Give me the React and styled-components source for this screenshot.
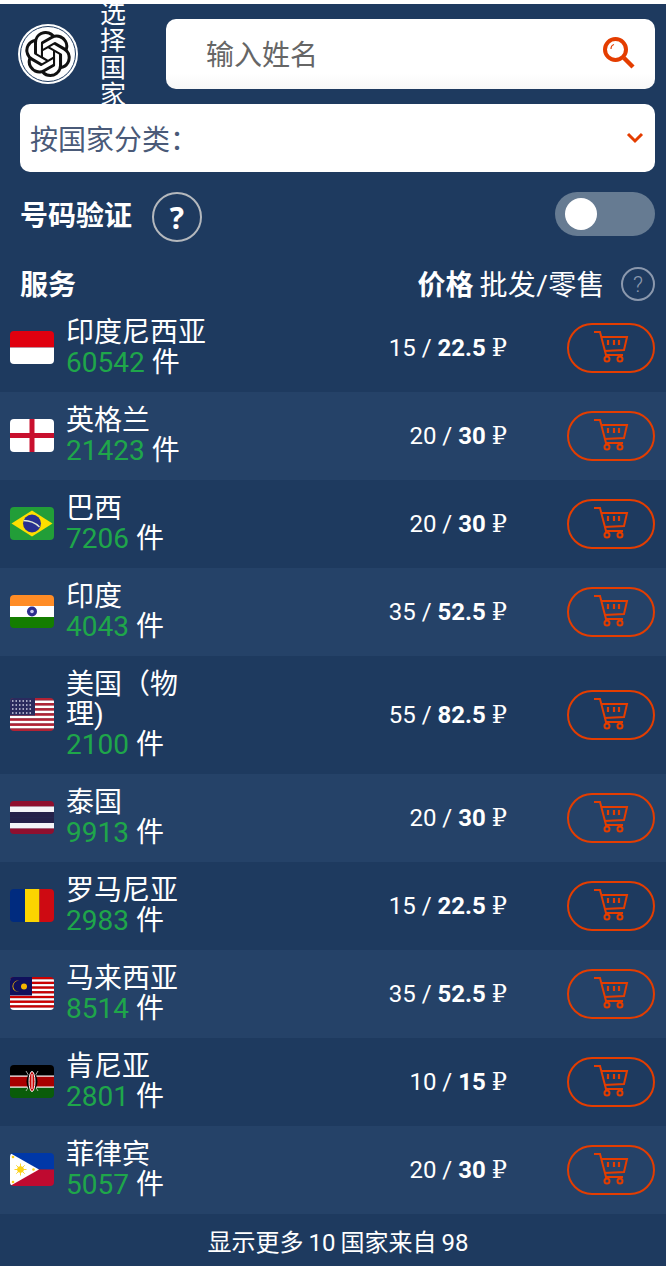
import React from "react";
import styled, { createGlobalStyle } from "styled-components";
import { SiOpenai } from "react-icons/si";

const ORANGE = "#e43d00";

const Global = createGlobalStyle`
  * { box-sizing: border-box; }
  html, body { margin: 0; padding: 0; background: #fff; }
  body { font-family: Roboto, "Noto Sans CJK SC", sans-serif; }
`;

const Page = styled.div`
  margin-top: 4px;
  width: 666px;
  height: 1262px;
  overflow: hidden;
  background: #1e3a5f;
  color: #fff;
`;

const TopBar = styled.div`
  display: flex;
  align-items: center;
  height: 100px;
  padding: 0 11px 0 18px;
  overflow: hidden;
`;

const LogoCircle = styled.div`
  display: flex;
  flex: none;
  align-items: center;
  justify-content: center;
  width: 60px;
  height: 60px;
  border-radius: 50%;
  background: #fff;
  color: #111;
  &::before {
    content: "";
    position: absolute;
    width: 54px;
    height: 54px;
    border: 1px solid #1e3a5f;
    border-radius: 50%;
  }
`;

const CountryLabel = styled.div`
  flex: none;
  width: 26px;
  margin: 1px 40px 0 22px;
  font-size: 26px;
  line-height: 27px;
`;

const SearchBox = styled.div`
  display: flex;
  flex: 1;
  align-items: center;
  justify-content: space-between;
  height: 70px;
  padding: 0 19px 0 40px;
  border-radius: 10px;
  background: linear-gradient(#fff 78%, #f7f7f7);
  color: #666;
  font-size: 28px;
  svg { margin-top: -2px; }
`;

const SearchHint = styled.span`
  margin-bottom: 2px;
`;

const SelectBox = styled.div`
  display: flex;
  align-items: center;
  justify-content: space-between;
  height: 68px;
  margin: 0 11px 0 20px;
  padding: 0 11px 0 10px;
  border-radius: 10px;
  background: #fff;
  color: #4a5a78;
  font-size: 28px;
`;

const CheckRow = styled.div`
  display: flex;
  align-items: center;
  height: 50px;
  margin-top: 20px;
  padding: 0 11px 0 20px;
  font-size: 28px;
  font-weight: 700;
`;

const CheckLabel = styled.span`
  margin-bottom: 6px;
`;

const BigHelp = styled.div`
  display: flex;
  align-items: center;
  justify-content: center;
  width: 50px;
  height: 50px;
  margin-left: 20px;
  border: 2px solid #b4b8bd;
  border-radius: 50%;
  font-family: "Open Sans", sans-serif;
  font-size: 30px;
  font-weight: 700;
`;

const Toggle = styled.div`
  display: flex;
  align-items: center;
  width: 100px;
  height: 44px;
  margin: -6px 0 0 auto;
  padding-left: 10px;
  border-radius: 22px;
  background: #667b92;
  &::before {
    content: "";
    width: 32px;
    height: 32px;
    border-radius: 50%;
    background: #fff;
  }
`;

const ListHead = styled.div`
  display: flex;
  align-items: center;
  height: 40px;
  margin-top: 22px;
  padding: 0 11px 0 20px;
  font-size: 28px;
`;

const HeadTitle = styled.b`
  margin: 0 auto 2px 0;
`;

const HeadPrice = styled.div`
  margin: 0 16px 2px 0;
  letter-spacing: 0.4px;
  b { margin-right: 6px; letter-spacing: 0; }
`;

const SmallHelp = styled.div`
  display: flex;
  align-items: center;
  justify-content: center;
  width: 34px;
  height: 34px;
  border: 2px solid #8b98ad;
  border-radius: 50%;
  color: #8b98ad;
  font-size: 22px;
  font-weight: 300;
`;

const Row = styled.div`
  display: flex;
  align-items: center;
  padding: 14px 11px 14px 10px;
  background: ${(p) => (p.$alt ? "#254268" : "#1e3a5f")};
`;

const FlagBox = styled.svg`
  flex: none;
  width: 44px;
  height: 33px;
  margin: 0 12px 2px 0;
  border-radius: 4px;
`;

const Info = styled.div`
  flex: none;
  width: 140px;
  font-size: 28px;
  line-height: 30px;
`;

const Count = styled.span`
  color: #1fa64a;
`;

const Price = styled.div`
  flex: 1;
  margin-right: 60px;
  font-size: 24px;
  text-align: right;
`;

const Ruble = styled.span`
  font-family: "DejaVu Serif", "Liberation Serif", serif;
  font-size: 24px;
`;

const CartButton = styled.div`
  display: flex;
  flex: none;
  align-items: center;
  justify-content: center;
  width: 88px;
  height: 50px;
  border: 2px solid ${ORANGE};
  border-radius: 25px;
  svg { margin-top: -2px; }
`;

const Footer = styled.div`
  padding: 12px 0 0 10px;
  font-size: 24px;
  line-height: 34px;
  text-align: center;
  word-spacing: -1px;
`;

const SearchIcon = () => (
  <svg width="34" height="34" viewBox="0 0 34 34" fill="none" stroke={ORANGE}>
    <circle cx="13.5" cy="13.5" r="10.5" strokeWidth="4" />
    <path d="M22 22l9 9" strokeWidth="4.4" />
    <path d="M9 13c0-2 1-4 3-4.500" strokeWidth="1.2" />
  </svg>
);

const Chevron = () => (
  <svg width="18" height="12" viewBox="0 0 18 12" fill="none" stroke={ORANGE} strokeWidth="3">
    <path d="M2 2l7 7 7-7" />
  </svg>
);

const CartIcon = () => (
  <svg width="36" height="34" viewBox="0 0 36 34" fill="none" stroke={ORANGE} strokeWidth="2">
    <path d="M1 2h6l6 23h17" />
    <path d="M8 7h26l-3 13-20 1" />
    <path d="M15 10v5M21 10v5M26 10v5" strokeWidth="2.200" />
    <circle cx="14" cy="29" r="2.500" />
    <circle cx="27" cy="29" r="2.500" />
  </svg>
);

const stripes = (colors, x = 44) => {
  const h = 33 / colors.length;
  return colors.map((c, i) => <rect key={i} x="0" y={i * h} width={x} height={h + 0.2} fill={c} />);
};

const flags = {
  id: (
    <>
      <rect width="44" height="16.500" fill="#e0000f" />
      <rect y="16.500" width="44" height="16.500" fill="#fff" />
    </>
  ),
  gb: (
    <>
      <rect width="44" height="33" fill="#fff" />
      <path d="M22 0v33M0 16.500h44" stroke="#c8102e" strokeWidth="5" />
    </>
  ),
  br: (
    <>
      <rect width="44" height="33" fill="#229e38" />
      <path d="M22 3.500L42.500 16.500 22 29.500 1.500 16.500z" fill="#fedf00" />
      <circle cx="22" cy="16.500" r="9" fill="#28308f" />
      <path d="M13.500 13.500c6 0 11.500 2 16 6.500" stroke="#dfe8d8" strokeWidth="1.300" fill="none" />
    </>
  ),
  in: (
    <>
      {stripes(["#ff8c26", "#fff", "#147d00"])}
      <circle cx="22" cy="16.500" r="5" fill="#2e2e8f" />
      <circle cx="22" cy="16.500" r="1.800" fill="#c9c9ee" />
    </>
  ),
  us: (
    <>
      {stripes(["#b22234", "#fff", "#b22234", "#fff", "#b22234", "#fff", "#b22234", "#fff", "#b22234", "#fff", "#b22234", "#fff", "#b22234"])}
      <rect width="25" height="17.500" fill="#2a2a5e" />
      <path d="M2 3h21M2 7h21M2 11h21M2 15h21" stroke="#cfd0e4" strokeWidth="1.300" strokeDasharray="1.500 2" />
    </>
  ),
  th: (
    <>
      {stripes(["#8f0f2e", "#f4f5f8", "#25224a", "#25224a", "#f4f5f8", "#8f0f2e"])}
    </>
  ),
  ro: (
    <>
      <rect width="15" height="33" fill="#002b7f" />
      <rect x="15" width="14.500" height="33" fill="#fcd500" />
      <rect x="29.500" width="14.500" height="33" fill="#ce0a12" />
    </>
  ),
  my: (
    <>
      {stripes(["#cc0000", "#fff", "#cc0000", "#fff", "#cc0000", "#fff", "#cc0000", "#fff", "#cc0000", "#fff", "#cc0000", "#fff", "#cc0000", "#fff"])}
      <rect width="22" height="18.500" fill="#10105c" />
      <path d="M9 3.500a5.800 5.800 0 1 0 0 11.500 4.800 4.800 0 1 1 0-11.500z" fill="#f4b400" />
      <circle cx="14" cy="9.500" r="3" fill="#f4b400" />
    </>
  ),
  ke: (
    <>
      {stripes(["#000", "#a80000", "#0a5c0a"])}
      <rect y="10.500" width="44" height="1.200" fill="#fff" />
      <rect y="21.500" width="44" height="1.200" fill="#fff" />
      <path d="M16 6l12 20M28 6L16 26" stroke="#ccc" strokeWidth="0.800" />
      <ellipse cx="22" cy="16.500" rx="5.500" ry="9" fill="#000" />
      <ellipse cx="22" cy="16.500" rx="3" ry="10" fill="#c60000" stroke="#fff" />
      <path d="M22 9v15" stroke="#fff" strokeWidth="1" />
    </>
  ),
  ph: (
    <>
      <rect width="44" height="16.500" fill="#0038a8" />
      <rect y="16.500" width="44" height="16.500" fill="#bf0a30" />
      <path d="M0 0l29 16.500L0 33z" fill="#fff" />
      <circle cx="10.500" cy="16.500" r="3.300" fill="#fcd116" />
      <path d="M10.500 10.500v12M4.500 16.500h12M6.300 12.300l8.400 8.400M14.700 12.300l-8.400 8.400" stroke="#fcd116" strokeWidth="0.900" />
      <circle cx="3" cy="4" r="1.300" fill="#fcd116" />
      <circle cx="3" cy="29" r="1.300" fill="#fcd116" />
      <circle cx="23.500" cy="16.500" r="1.300" fill="#fcd116" />
    </>
  ),
};

const countries = [
  { flag: "id", name: "印度尼西亚", count: 60542, opt: "15", retail: "22.5" },
  { flag: "gb", name: "英格兰", count: 21423, opt: "20", retail: "30" },
  { flag: "br", name: "巴西", count: 7206, opt: "20", retail: "30" },
  { flag: "in", name: "印度", count: 4043, opt: "35", retail: "52.5" },
  { flag: "us", name: "美国（物理)", count: 2100, opt: "55", retail: "82.5" },
  { flag: "th", name: "泰国", count: 9913, opt: "20", retail: "30" },
  { flag: "ro", name: "罗马尼亚", count: 2983, opt: "15", retail: "22.5" },
  { flag: "my", name: "马来西亚", count: 8514, opt: "35", retail: "52.5" },
  { flag: "ke", name: "肯尼亚", count: 2801, opt: "10", retail: "15" },
  { flag: "ph", name: "菲律宾", count: 5057, opt: "20", retail: "30" },
];

export default function App() {
  return (
    <Page>
      <Global />
      <TopBar>
        <LogoCircle>
          <SiOpenai size={46} />
        </LogoCircle>
        <CountryLabel>选择国家</CountryLabel>
        <SearchBox>
          <SearchHint>输入姓名</SearchHint>
          <SearchIcon />
        </SearchBox>
      </TopBar>
      <SelectBox>
        按国家分类：
        <Chevron />
      </SelectBox>
      <CheckRow>
        <CheckLabel>号码验证</CheckLabel>
        <BigHelp>?</BigHelp>
        <Toggle />
      </CheckRow>
      <ListHead>
        <HeadTitle>服务</HeadTitle>
        <HeadPrice>
          <b>价格</b>批发/零售
        </HeadPrice>
        <SmallHelp>?</SmallHelp>
      </ListHead>
      {countries.map((c, i) => (
        <Row key={c.flag} $alt={i % 2 === 1}>
          <FlagBox viewBox="0 0 44 33">{flags[c.flag]}</FlagBox>
          <Info>
            {c.name}
            <br />
            <Count>{c.count}</Count> 件
          </Info>
          <Price>
            {c.opt} / <b>{c.retail}</b> <Ruble>₽</Ruble>
          </Price>
          <CartButton>
            <CartIcon />
          </CartButton>
        </Row>
      ))}
      <Footer>显示更多 10 国家来自 98</Footer>
    </Page>
  );
}
